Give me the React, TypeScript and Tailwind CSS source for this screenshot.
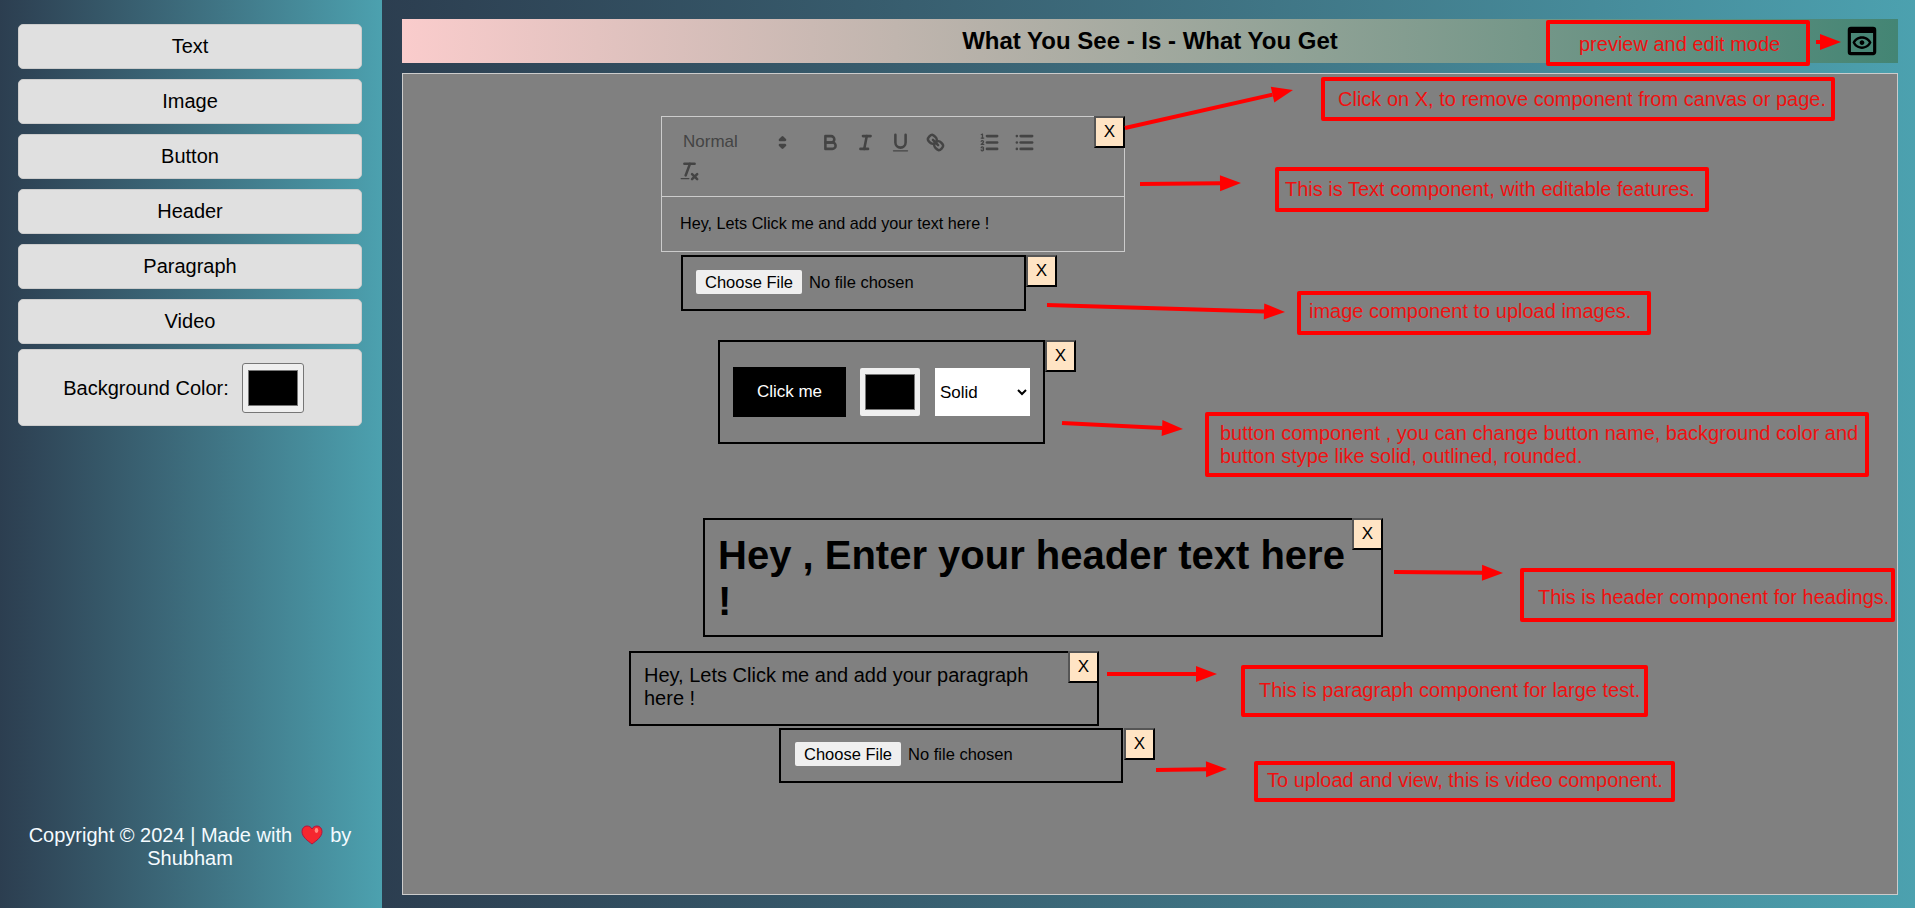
import { MdOutlinePreview } from "react-icons/md";

const sidebarItems = ["Text", "Image", "Button", "Header", "Paragraph", "Video"];

// [x1, y1, x2, y2] in page pixels, the annotation arrows of the screenshot
const arrows = [
  [1125, 128, 1293, 90],
  [1140, 184, 1241, 183],
  [1047, 305, 1285, 312],
  [1062, 423, 1183, 429],
  [1394, 572, 1503, 573],
  [1107, 674, 1217, 674],
  [1156, 770, 1227, 769],
  [1816, 42, 1841, 42],
];

function Arrow({ line }: { line: number[] }) {
  const [x1, y1, x2, y2] = line;
  const len = Math.hypot(x2 - x1, y2 - y1);
  const ux = (x2 - x1) / len;
  const uy = (y2 - y1) / len;
  const bx = x2 - ux * 21;
  const by = y2 - uy * 21;
  const head = `${x2},${y2} ${bx - uy * 8},${by + ux * 8} ${bx + uy * 8},${by - ux * 8}`;
  return (
    <g>
      <line x1={x1} y1={y1} x2={bx} y2={by} stroke="#ff0000" strokeWidth="4" />
      <polygon points={head} fill="#ff0000" />
    </g>
  );
}

function CloseButton({ className }: { className: string }) {
  return (
    <button className={`absolute flex h-[32px] w-[31px] items-center justify-center border-2 border-black border-t-[#555] border-l-[#555] bg-[#ffe4c4] text-[17px] text-black ${className}`}>
      X
    </button>
  );
}

function QlIcon({ children }: { children: React.ReactNode }) {
  return (
    <span className="flex w-[35px] justify-center">
      <svg viewBox="0 0 18 18" className="h-[23px] w-[23px]" fill="none" stroke="#444" strokeWidth="2" strokeLinecap="round" strokeLinejoin="round">
        {children}
      </svg>
    </span>
  );
}

function TextComponent() {
  return (
    <div className="absolute left-[258px] top-[42px] h-[136px] w-[464px] border border-[#ccc]">
      <div className="h-[80px] border-b border-[#ccc] pt-[13px]">
        <div className="flex h-[24px] items-center pl-[21px]">
          <div className="mr-[19px] flex w-[111px] items-center justify-between">
            <span className="text-[17px] text-[#444]">Normal</span>
            <svg viewBox="0 0 18 18" className="h-[23px] w-[23px]" fill="#444" stroke="#444" strokeWidth="2" strokeLinejoin="round">
              <polygon points="7 11 9 13 11 11 7 11" />
              <polygon points="7 7 9 5 11 7 7 7" />
            </svg>
          </div>
          <QlIcon>
            <path d="M5,4H9.5A2.5,2.5,0,0,1,12,6.5v0A2.5,2.5,0,0,1,9.5,9H5A0,0,0,0,1,5,9V4A0,0,0,0,1,5,4Z" />
            <path d="M5,9h5.5A2.5,2.5,0,0,1,13,11.5v0A2.5,2.5,0,0,1,10.5,14H5a0,0,0,0,1,0,0V9A0,0,0,0,1,5,9Z" />
          </QlIcon>
          <QlIcon>
            <line x1="7" x2="13" y1="4" y2="4" />
            <line x1="5" x2="11" y1="14" y2="14" />
            <line x1="8" x2="10" y1="14" y2="4" />
          </QlIcon>
          <QlIcon>
            <path d="M5,3V9a4.012,4.012,0,0,0,4,4H9a4.012,4.012,0,0,0,4-4V3" />
            <rect x="3" y="15" width="12" height="1" rx="0.5" ry="0.5" fill="#444" stroke="none" />
          </QlIcon>
          <QlIcon>
            <line x1="7" x2="11" y1="7" y2="11" />
            <path d="M8.9,4.577a3.476,3.476,0,0,1,.36,4.679A3.476,3.476,0,0,1,4.577,8.9C3.185,7.5,2.035,6.4,4.217,4.217S7.5,3.185,8.9,4.577Z" />
            <path d="M13.423,9.1a3.476,3.476,0,0,0-4.679-.36,3.476,3.476,0,0,0,.36,4.679c1.392,1.392,2.5,2.542,4.679.36S14.815,10.5,13.423,9.1Z" />
          </QlIcon>
          <span className="ml-[19px]" />
          <QlIcon>
            <line x1="7" x2="15" y1="4" y2="4" />
            <line x1="7" x2="15" y1="9" y2="9" />
            <line x1="7" x2="15" y1="14" y2="14" />
            <line x1="2.5" x2="4.5" y1="5.5" y2="5.5" strokeWidth="1" />
            <path d="M3.5,6A0.5,0.5,0,0,1,3,5.5V3.085l-0.276.138A0.5,0.5,0,0,1,2.053,3c-0.124-.247-0.023-0.324.224-0.447l1-.5A0.5,0.5,0,0,1,4,2.5v3A0.5,0.5,0,0,1,3.5,6Z" fill="#444" stroke="none" />
            <path d="M4.5,10.5h-2c0-.234,1.85-1.076,1.85-2.234A0.959,0.959,0,0,0,2.5,8.156" strokeWidth="1" />
            <path d="M2.5,14.846a0.959,0.959,0,0,0,1.85-.109A0.7,0.7,0,0,0,3.75,14a0.688,0.688,0,0,0,.6-0.736,0.959,0.959,0,0,0-1.85-.109" strokeWidth="1" />
          </QlIcon>
          <QlIcon>
            <line x1="6" x2="15" y1="4" y2="4" />
            <line x1="6" x2="15" y1="9" y2="9" />
            <line x1="6" x2="15" y1="14" y2="14" />
            <line x1="3" x2="3" y1="4" y2="4" />
            <line x1="3" x2="3" y1="9" y2="9" />
            <line x1="3" x2="3" y1="14" y2="14" />
          </QlIcon>
        </div>
        <div className="mt-[6px] pl-[16px]">
          <svg viewBox="0 0 18 18" className="h-[23px] w-[23px]" fill="none" stroke="#444" strokeWidth="2" strokeLinecap="round">
            <line x1="5" x2="13" y1="3" y2="3" />
            <line x1="6" x2="9.35" y1="12" y2="3" />
            <line x1="11" x2="15" y1="11" y2="15" />
            <line x1="15" x2="11" y1="11" y2="15" />
            <rect x="2" y="14" width="7" height="1" rx="0.5" ry="0.5" fill="#444" stroke="none" />
          </svg>
        </div>
      </div>
      <p className="pl-[18px] pt-[17px] text-[16.2px] leading-[19px] text-black">Hey, Lets Click me and add your text here !</p>
    </div>
  );
}

function FileInput() {
  return (
    <input
      type="file"
      className="w-[300px] text-[16.5px] text-black file:mr-[7px] file:h-[24px] file:rounded-[2px] file:border-0 file:bg-[#efefef] file:px-[9px]"
    />
  );
}

function Annotation({ className, children }: { className: string; children: React.ReactNode }) {
  return (
    <div className={`absolute rounded-[2px] border-4 border-[#ff0000] text-[20px] leading-[23px] text-[#f01010] ${className}`}>
      {children}
    </div>
  );
}

export default function App() {
  return (
    <div className="relative flex h-[908px] w-[1915px] overflow-hidden font-['Liberation_Sans',sans-serif]">
      <aside className="flex w-[382px] flex-col justify-between bg-linear-to-r from-[#2c3e50] to-[#4ca1af] pb-[38px] pl-[18px] pr-[20px] pt-[24px]">
        <div>
          <div className="flex flex-col gap-[10px]">
            {sidebarItems.map((item) => (
              <button key={item} className="h-[45px] rounded-[5px] border border-[#ccc] bg-[#e0e0e0] pb-[1px] text-[20px] text-black">
                {item}
              </button>
            ))}
          </div>
          <div className="mt-[5px] flex h-[77px] items-center justify-center rounded-[5px] border border-[#ccc] bg-[#e0e0e0]">
            <label className="text-[20px] text-black">Background Color:</label>
            <input
              type="color"
              defaultValue="#000000"
              className="ml-[13px] mr-[13px] h-[50px] w-[62px] rounded-[3px] border border-[#767676] bg-[#efefef] px-[3px] py-[2px]"
            />
          </div>
        </div>
        <p className="text-center text-[20px] leading-[23px] text-[#f5fbff]">
          Copyright © 2024 | Made with{" "}
          <svg viewBox="0 0 22 20" className="ml-[3px] mr-[2px] inline h-[20px] w-[22px] align-[-3px]">
            <path d="M11 19 C7 16 1 12 1 6.5 C1 3 3.5 1 6 1 C8 1 10 2 11 4 C12 2 14 1 16 1 C18.5 1 21 3 21 6.5 C21 12 15 16 11 19Z" fill="#f5262f" stroke="#b3123f" strokeWidth="1" />
            <ellipse cx="15.5" cy="5.5" rx="1.8" ry="2.4" fill="#ff8a80" />
          </svg>{" "}
          by Shubham
        </p>
      </aside>

      <main className="flex flex-1 flex-col bg-linear-to-r from-[#2c3e50] to-[#4ca1af] pb-[13px] pl-[20px] pr-[17px] pt-[19px]">
        <header className="relative flex h-[44px] items-center justify-center bg-linear-to-r from-[#facccc] to-[#438574]">
          <h1 className="text-[24px] font-bold text-black">What You See - Is - What You Get</h1>
          <MdOutlinePreview className="absolute right-[17px] top-[3px] text-black" size={38} />
        </header>

        <section className="relative mt-[10px] flex-1 border border-[#ccc] bg-[#808080]">
          <TextComponent />
          <CloseButton className="left-[691px] top-[42px]" />

          <div className="absolute left-[278px] top-[181px] flex h-[56px] w-[345px] items-center border-2 border-black pb-[2px] pl-[13px]">
            <FileInput />
          </div>
          <CloseButton className="left-[623px] top-[181px]" />

          <div className="absolute left-[315px] top-[266px] flex h-[104px] w-[327px] items-center border-2 border-black pl-[13px]">
            <button className="h-[50px] w-[113px] bg-black text-[17px] text-white">Click me</button>
            <input type="color" defaultValue="#000000" className="ml-[14px] h-[48px] w-[60px] rounded-[2px] bg-[#efefef] px-[3px] py-[2px]" />
            <select className="ml-[15px] h-[48px] w-[95px] bg-white pl-[1px] text-[17px] text-black">
              <option>Solid</option>
              <option>Outlined</option>
              <option>Rounded</option>
            </select>
          </div>
          <CloseButton className="left-[642px] top-[266px]" />

          <div className="absolute left-[300px] top-[444px] h-[119px] w-[680px] border-2 border-black pl-[13px] pr-[15px] pt-[12px]">
            <h2 className="text-[40px] font-bold leading-[46px] text-black">Hey , Enter your header text here !</h2>
          </div>
          <CloseButton className="left-[949px] top-[444px]" />

          <div className="absolute left-[226px] top-[577px] h-[75px] w-[470px] border-2 border-black pl-[13px] pr-[50px] pt-[11px]">
            <p className="text-[20px] leading-[23px] text-black">Hey, Lets Click me and add your paragraph here !</p>
          </div>
          <CloseButton className="left-[665px] top-[577px]" />

          <div className="absolute left-[376px] top-[654px] flex h-[55px] w-[344px] items-center border-2 border-black pb-[2px] pl-[14px]">
            <FileInput />
          </div>
          <CloseButton className="left-[721px] top-[654px]" />
        </section>
      </main>

      <Annotation className="left-[1546px] top-[20px] flex h-[46px] w-[264px] items-center pl-[29px] pt-[2px]">preview and edit mode</Annotation>
      <Annotation className="left-[1321px] top-[77px] flex h-[44px] w-[514px] items-center pl-[13px]">Click on X, to remove component from canvas or page.</Annotation>
      <Annotation className="left-[1275px] top-[167px] flex h-[45px] w-[434px] items-center pl-[6px]">This is Text component, with editable features.</Annotation>
      <Annotation className="left-[1297px] top-[291px] flex h-[44px] w-[354px] items-center pb-[3px] pl-[8px]">image component to upload images.</Annotation>
      <Annotation className="left-[1205px] top-[412px] h-[65px] w-[664px] pl-[11px] pt-[6px]">
        button component , you can change button name, background color and button stype like solid, outlined, rounded.
      </Annotation>
      <Annotation className="left-[1520px] top-[568px] flex h-[54px] w-[375px] items-center pl-[14px] pt-[4px]">This is header component for headings.</Annotation>
      <Annotation className="left-[1241px] top-[665px] flex h-[52px] w-[407px] items-center pb-[1px] pl-[14px]">This is paragraph component for large test.</Annotation>
      <Annotation className="left-[1254px] top-[761px] flex h-[41px] w-[421px] items-center pb-[3px] pl-[9px]">To upload and view, this is video component.</Annotation>

      <svg className="pointer-events-none absolute left-0 top-0 h-[908px] w-[1915px]">
        {arrows.map((line) => (
          <Arrow key={line.join("-")} line={line} />
        ))}
      </svg>
    </div>
  );
}
